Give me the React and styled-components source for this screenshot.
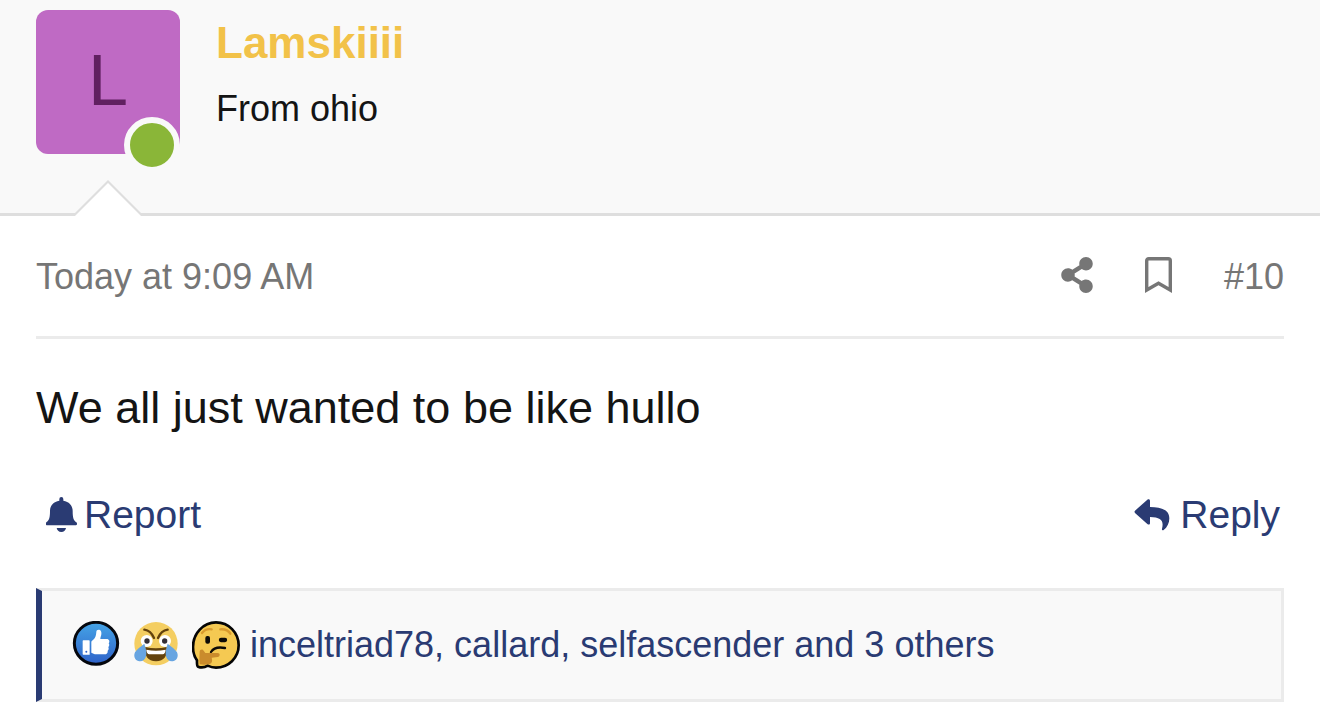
import React from 'react';
import styled, { createGlobalStyle } from 'styled-components';
import { FaShareAlt } from 'react-icons/fa';

const GlobalStyle = createGlobalStyle`
  * {
    box-sizing: border-box;
  }

  body {
    margin: 0;
    background: #ffffff;
    color: #141414;
    font-family: "Liberation Sans", Arial, sans-serif;
  }

  a {
    color: inherit;
    text-decoration: none;
  }

  svg {
    display: block;
    flex-shrink: 0;
  }
`;

// --- User header ---
const UserHeader = styled.header`
  position: relative;
  display: flex;
  gap: 36px;
  padding: 10px 36px 59px;
  background: #f9f9f9;
  border-bottom: 3px solid #dedede;
`;

const Avatar = styled.a`
  position: relative;
  flex-shrink: 0;
  width: 144px;
  height: 144px;
  border-radius: 12px;
  background: #bf6ac4;
  color: #602060;
  font-size: 72px;
  line-height: 140px;
  text-align: center;
`;

const OnlineDot = styled.span`
  position: absolute;
  right: 0;
  bottom: 0;
  width: 56px;
  height: 56px;
  border: 6px solid #f9f9f9;
  border-radius: 50%;
  background: #8ab638;
`;

const DotHolder = styled.span`
  position: absolute;
  right: 0;
  bottom: -19px;
  width: 56px;
  height: 56px;
`;

const UserInfo = styled.div`
  padding-top: 1px;
`;

const UserName = styled.h4`
  margin: 0;
  color: #f2c249;
  font-size: 44px;
  font-weight: 700;
  line-height: 63px;
`;

const UserTitle = styled.h5`
  margin: 10px 0 0;
  font-size: 36px;
  font-weight: 400;
  line-height: 50px;
`;

const HeaderArrow = styled.span`
  position: absolute;
  left: 72px;
  bottom: -3px;
  border: 36px solid transparent;
  border-top-width: 0;
  border-bottom-color: #dedede;

  &::after {
    content: '';
    position: absolute;
    top: 3px;
    left: -33px;
    border: 33px solid transparent;
    border-top-width: 0;
    border-bottom-color: #ffffff;
  }
`;

// --- Post body ---
const PostBody = styled.div`
  padding: 0 36px;
`;

const PostMeta = styled.div`
  display: flex;
  align-items: center;
  justify-content: space-between;
  padding: 36px 0 34px;
  border-bottom: 3px solid #ebebeb;
  color: #767676;
  font-size: 36px;
  line-height: 50px;
`;

const MetaTools = styled.div`
  display: flex;
  align-items: center;
  gap: 52px;
`;

const IconButton = styled.button`
  display: flex;
  padding: 0 0 5px;
  border: 0;
  background: none;
  color: inherit;
`;

const ShareIcon = styled(FaShareAlt)`
  width: 32px;
  height: 36px;
`;

const Message = styled.p`
  margin: 37px 0 48px;
  font-size: 45px;
  line-height: 63px;
`;

const ActionBar = styled.div`
  display: flex;
  align-items: center;
  justify-content: space-between;
  padding: 0 4px 0 10px;
  color: #2a3b73;
  font-size: 39px;
  line-height: 55px;
`;

const ActionLink = styled.a`
  display: flex;
  align-items: center;
  gap: ${(props) => props.$gap}px;
`;

const ReactionsBar = styled.div`
  display: flex;
  align-items: center;
  gap: 12px;
  height: 114px;
  margin-top: 46px;
  padding: 0 30px;
  border: 3px solid #ebebeb;
  border-left: 6px solid #2a3b73;
  background: #f9f9f9;
`;

const ReactionsLink = styled.a`
  margin-left: -2px;
  color: #2a3b73;
  font-size: 36px;
  line-height: 50px;
`;

const BookmarkIcon = () => (
  <svg width="27" height="36" viewBox="0 0 27 36" fill="none" stroke="currentColor" strokeWidth="3.4">
    <path d="M1.7 33V3.7a2 2 0 0 1 2-2h19.6a2 2 0 0 1 2 2V33L13.5 26.3z" />
  </svg>
);

const BellIcon = () => (
  <svg width="31" height="36" viewBox="0 0 93 108" fill="currentColor">
    <path d="M40 6a6 6 0 0 1 12 0v5c18 3 28 15 28 31 0 19 2 27 11 34 4 4 2 9-3 9H4c-5 0-6-5-3-9 9-7 11-15 11-34 0-16 10-28 28-31z" />
    <path d="M32 93h28c-1 7-6 12-14 12s-13-5-14-12z" />
  </svg>
);

const ReplyIcon = () => (
  <svg width="36" height="32" viewBox="0 0 108 96" fill="currentColor">
    <path d="M3 35 40 2c4-3 8-1 8 4v18c36 1 58 9 58 34 0 14-6 27-17 35-3 2-6 0-5-4 6-24-2-34-36-35v18c0 5-4 6-8 3L3 42c-2-2-2-5 0-7z" />
  </svg>
);

const LikeEmoji = () => (
  <svg width="48" height="48" viewBox="36 33 144 144" role="img" aria-label="Like">
    <defs>
      <linearGradient id="like" x1="0" y1="0" x2="0" y2="1">
        <stop offset="0" stopColor="#45a4e6" />
        <stop offset="1" stopColor="#2f62c9" />
      </linearGradient>
    </defs>
    <ellipse cx="108" cy="100" rx="65" ry="63" fill="url(#like)" stroke="#05070d" strokeWidth="9" />
    <path fill="#fff" d="M70 91h17q2 0 2 2v41H70q-2 0-2-2V93q0-2 2-2zM94 97c0-4 2-5 5-7 7-5 9-12 10-24 0-5 3-7 7-7 7 0 9 7 8 14-1 6-3 10-3 14h19c8 0 10 8 6 13 3 4 2 9-1 11 2 5 1 9-2 11 1 6-2 11-10 11h-24c-7 0-10-3-15-5z" />
    <circle cx="79" cy="125" r="3" fill="#2f62c9" />
  </svg>
);

const LaughEmoji = () => (
  <svg width="48" height="48" viewBox="21 33 144 144" role="img" aria-label="JFL">
    <circle cx="93" cy="101" r="65" fill="#f4ce62" />
    <circle cx="65" cy="93" r="18" fill="#fff" />
    <circle cx="120" cy="93" r="18" fill="#fff" />
    <circle cx="66" cy="93" r="8" fill="#342f35" />
    <circle cx="119" cy="93" r="8" fill="#342f35" />
    <path
      d="M58 59c13 2 23 11 29 25M128 59c-13 2-23 11-29 25"
      fill="none"
      stroke="#63420d"
      strokeWidth="7"
      strokeLinecap="round"
    />
    <path fill="#63420d" d="M61 111q32 8 64 0c4 26-8 43-32 43s-36-17-32-43z" />
    <path fill="#fff" d="M64 119q29 6 58 0-1 13-9 14H73q-8-1-9-14z" />
    <path fill="#68a5e1" d="M58 101c5 16 8 28 5 38-3 12-13 17-23 14-11-3-15-15-10-26 5-10 17-16 28-26zM128 101c-5 16-8 28-5 38 3 12 13 17 23 14 11-3 15-15 10-26-5-10-17-16-28-26z" />
  </svg>
);

const ThinkEmoji = () => (
  <svg width="48" height="48" viewBox="21 33 144 144" role="img" aria-label="Hmm">
    <path
      d="M39 170c-4-3-3-11-3-19-9-12-12-24-12-40C24 70 55 37 93 37s68 31 68 69-31 67-68 67c-9 0-17-2-25-6-8 5-21 6-29 3z"
      fill="#f5c952"
      stroke="#050505"
      strokeWidth="8"
    />
    <g fill="none" strokeLinecap="round">
      <path d="M51 69c8-10 18-13 29-11M106 58c12-1 24 3 30 13" stroke="#d99b2e" strokeWidth="7" />
      <path d="M78 126c8-13 22-16 42-12" stroke="#0c0a07" strokeWidth="7" />
      <path d="M108 90h12" stroke="#0c0a07" strokeWidth="13" />
    </g>
    <rect x="61" y="78" width="14" height="23" rx="6" fill="#0c0a07" />
    <path fill="#ca8b2c" d="M44 125c0-7 9-9 12-3l5 7h37c8 0 8 11 0 12l-18 2c3 9 1 17-6 19-10 3-21 3-30 1-2-12 0-26 0-38z" />
  </svg>
);

const App = () => (
  <>
    <GlobalStyle />
    <article>
      <UserHeader>
        <Avatar href="#user">
          L
          <DotHolder>
            <OnlineDot />
          </DotHolder>
        </Avatar>
        <UserInfo>
          <UserName>
            <a href="#user">Lamskiiii</a>
          </UserName>
          <UserTitle>From ohio</UserTitle>
        </UserInfo>
        <HeaderArrow />
      </UserHeader>

      <PostBody>
        <PostMeta>
          <a href="#post">
            <time>Today at 9:09 AM</time>
          </a>
          <MetaTools>
            <IconButton type="button" aria-label="Share">
              <ShareIcon />
            </IconButton>
            <IconButton type="button" aria-label="Add bookmark">
              <BookmarkIcon />
            </IconButton>
            <a href="#post">#10</a>
          </MetaTools>
        </PostMeta>

        <Message>We all just wanted to be like hullo</Message>

        <ActionBar>
          <ActionLink href="#report" $gap={7}>
            <BellIcon />
            Report
          </ActionLink>
          <ActionLink href="#reply" $gap={10}>
            <ReplyIcon />
            Reply
          </ActionLink>
        </ActionBar>

        <ReactionsBar>
          <LikeEmoji />
          <LaughEmoji />
          <ThinkEmoji />
          <ReactionsLink href="#reactions">inceltriad78, callard, selfascender and 3 others</ReactionsLink>
        </ReactionsBar>
      </PostBody>
    </article>
  </>
);

export default App;
